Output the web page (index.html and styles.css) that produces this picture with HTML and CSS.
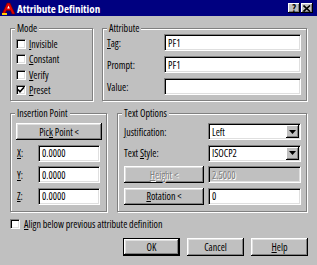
FILE: index.html
```html
<!DOCTYPE html>
<html>
<head>
<meta charset="utf-8">
<title>Attribute Definition</title>
<link rel="stylesheet" href="styles.css">
</head>
<body>
<div class="dialog">
  <div class="titlebar">
    <svg class="app-icon" width="13" height="13" viewBox="0 0 13 13">
      <polygon points="0,12 5,1 8,1 13,12 10,12 8.5,8.5 4.5,8.5 3,12" fill="#e00000" stroke="#600000" stroke-width="0.6"/>
      <polygon points="5.2,6.6 6.5,3.4 7.8,6.6" fill="#ffffff"/>
      <rect x="0" y="11" width="5" height="2" fill="#ffd000"/>
    </svg>
    <span class="caption">Attribute Definition</span>
    <div class="caption-btns">
      <span class="cbtn help">?</span>
      <span class="cbtn">
        <svg width="8" height="7" viewBox="0 0 8 7"><path d="M0.5 0.5 L7 6.5 M7 0.5 L0.5 6.5" stroke="#000" stroke-width="1.6"/></svg>
      </span>
    </div>
  </div>

  <div class="content">
    <div class="row-top">
      <div class="group mode">
        <span class="group-title">Mode</span>
        <div class="checks">
          <div class="check"><span class="box"></span><span><u>I</u>nvisible</span></div>
          <div class="check"><span class="box"></span><span><u>C</u>onstant</span></div>
          <div class="check"><span class="box"></span><span><u>V</u>erify</span></div>
          <div class="check"><span class="box"><svg width="8" height="8" viewBox="0 0 8 8"><path d="M1 3.5 L3 5.8 L7 1.2" stroke="#000" stroke-width="1.6" fill="none"/></svg></span><span><u>P</u>reset</span></div>
        </div>
      </div>

      <div class="group attribute">
        <span class="group-title">Attribute</span>
        <div class="form attr-form">
          <span class="lbl"><span><u>T</u>ag:</span></span><span class="edit">PF1</span>
          <span class="lbl">Prompt:</span><span class="edit">PF1</span>
          <span class="lbl">Value:</span><span class="edit"></span>
        </div>
      </div>
    </div>

    <div class="row-bottom">
      <div class="group insertion">
        <span class="group-title">Insertion Point</span>
        <div class="ins-form">
          <span class="btn wide"><span>Pic<u>k</u> Point &lt;</span></span>
          <span class="lbl"><span><u>X</u>:</span></span><span class="edit">0.0000</span>
          <span class="lbl"><span><u>Y</u>:</span></span><span class="edit">0.0000</span>
          <span class="lbl"><span><u>Z</u>:</span></span><span class="edit">0.0000</span>
        </div>
      </div>

      <div class="group text-options">
        <span class="group-title">Text Options</span>
        <div class="form opt-form">
          <span class="lbl"><span><u>J</u>ustification:</span></span>
          <span class="edit combo">Left<span class="drop"><svg width="7" height="4" viewBox="0 0 7 4"><path d="M0 0 H7 L3.5 4 Z" fill="#000"/></svg></span></span>
          <span class="lbl"><span>Text <u>S</u>tyle:</span></span>
          <span class="edit combo">ISOCP2<span class="drop"><svg width="7" height="4" viewBox="0 0 7 4"><path d="M0 0 H7 L3.5 4 Z" fill="#000"/></svg></span></span>
          <span class="btn disabled"><span><u>H</u>eight &lt;</span></span>
          <span class="edit disabled">2.5000</span>
          <span class="btn"><span><u>R</u>otation &lt;</span></span>
          <span class="edit">0</span>
        </div>
      </div>
    </div>

    <div class="check align"><span class="box"></span><span><u>A</u>lign below previous attribute definition</span></div>

    <div class="buttons">
      <span class="btn default">OK</span>
      <span class="btn">Cancel</span>
      <span class="btn"><span><u>H</u>elp</span></span>
    </div>
  </div>
</div>
</body>
</html>
```

FILE: styles.css
```css
html, body {
  margin: 0;
  padding: 0;
  background: #c0c0c0;
}

.dialog {
  width: 317px;
  height: 265px;
  display: flex;
  flex-direction: column;
  background: #c0c0c0;
  font-family: "Open Sans", "Liberation Sans", Arial, sans-serif;
  font-stretch: 75%;
  font-size: 10px;
  color: #000;
  overflow: hidden;
}

u {
  text-decoration: underline;
  text-underline-offset: 1px;
}

/* title bar */
.titlebar {
  height: 16px;
  flex: none;
  display: flex;
  align-items: center;
  background: #000080;
  padding-left: 2px;
}
.app-icon {
  flex: none;
}
.caption {
  margin-left: 2px;
  color: #fff;
  font-weight: bold;
  font-size: 11px;
}
.caption-btns {
  margin-left: auto;
  margin-right: 4px;
  display: flex;
  gap: 1px;
}
.cbtn {
  width: 12px;
  height: 10px;
  display: flex;
  align-items: center;
  justify-content: center;
  background: #c0c0c0;
  box-shadow: inset -1px -1px #000, inset 1px 1px #fff, inset -2px -2px #808080;
  font-weight: bold;
  font-size: 10px;
  line-height: 10px;
}

/* body */
.content {
  padding: 12px 9px 0 10px;
  display: flex;
  flex-direction: column;
}

.row-top {
  display: grid;
  grid-template-columns: 83px 205px;
  column-gap: 9px;
  height: 73px;
}
.row-bottom {
  display: grid;
  grid-template-columns: 97px 190px;
  column-gap: 10px;
  height: 99px;
  margin-top: 12px;
}

.group {
  border: 1px solid #808080;
  box-shadow: inset 1px 1px #fff, 1px 1px #fff;
  display: flex;
  flex-direction: column;
}
.group-title {
  display: block;
  width: max-content;
  height: 11px;
  line-height: 11px;
  margin: -6px 0 0 4px;
  padding: 0 2px;
  background: #c0c0c0;
}

/* check boxes */
.checks {
  padding: 2px 0 0 5px;
  display: flex;
  flex-direction: column;
}
.check {
  height: 15.5px;
  display: flex;
  align-items: center;
  gap: 3px;
}
.box {
  width: 10px;
  height: 10px;
  box-sizing: border-box;
  flex: none;
  background: #fff;
  border-top: 1px solid #808080;
  border-left: 1px solid #808080;
  border-bottom: 1px solid #fff;
  border-right: 1px solid #fff;
  box-shadow: inset 1px 1px #000, inset -1px -1px #dfdfdf;
  display: flex;
  align-items: center;
  justify-content: center;
}

/* edit fields */
.edit {
  height: 17px;
  box-sizing: border-box;
  background: #fff;
  border-top: 1px solid #808080;
  border-left: 1px solid #808080;
  border-bottom: 1px solid #fff;
  border-right: 1px solid #fff;
  box-shadow: inset 1px 1px #000, inset -1px -1px #dfdfdf;
  padding: 0 0 0 3px;
  display: flex;
  align-items: center;
  position: relative;
}
.edit.disabled {
  background: #c0c0c0;
  color: #808080;
  text-shadow: 1px 1px #fff;
}
.combo .drop {
  position: absolute;
  right: 1px;
  top: 1px;
  bottom: 1px;
  width: 13px;
  background: #c0c0c0;
  box-shadow: inset -1px -1px #000, inset 1px 1px #fff, inset -2px -2px #808080;
  display: flex;
  align-items: center;
  justify-content: center;
}

.lbl {
  display: flex;
  align-items: center;
  height: 17px;
}

/* attribute form */
.form {
  display: grid;
  row-gap: 5px;
}
.attr-form {
  grid-template-columns: 57px 137px;
  grid-auto-rows: 17px;
  padding: 0 5px 0 4px;
}

.ins-form {
  display: grid;
  grid-template-columns: 22px 62px;
  grid-auto-rows: 17px;
  row-gap: 4.5px;
  padding: 4px 4px 0 5px;
}
.ins-form .wide {
  grid-column: 1 / 3;
  width: 86px;
}
.ins-form .lbl {
  padding-left: 1px;
}

.opt-form {
  grid-template-columns: 84px 93px;
  grid-auto-rows: 17px;
  row-gap: 4.5px;
  padding: 4px 5px 0 6px;
}
.opt-form .btn {
  width: 80px;
}

/* buttons */
.btn {
  height: 17px;
  box-sizing: border-box;
  background: #c0c0c0;
  box-shadow: inset -1px -1px #000, inset 1px 1px #fff, inset -2px -2px #808080, inset 2px 2px #dfdfdf;
  display: flex;
  align-items: center;
  justify-content: center;
}
.btn.disabled {
  color: #808080;
  text-shadow: 1px 1px #fff;
}

.align {
  margin-top: 7px;
  height: 10px;
  gap: 4px;
}

.buttons {
  margin-top: 9px;
  display: flex;
  justify-content: flex-end;
  gap: 7px;
}
.buttons .btn {
  width: 57px;
  height: 18px;
}
.buttons .default {
  border: 1px solid #000;
}
```
